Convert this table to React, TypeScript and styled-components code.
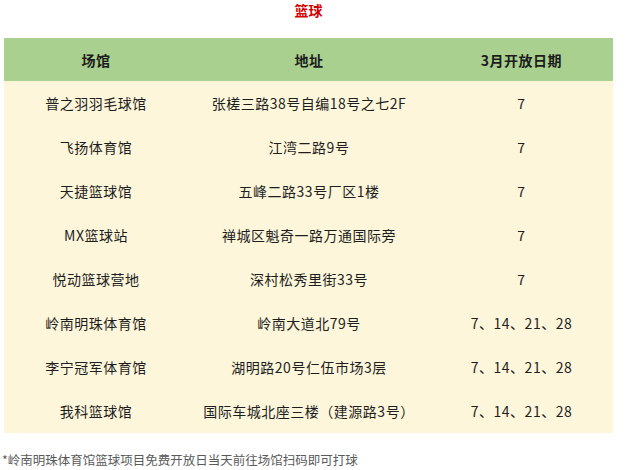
import React from "react";
import styled, { createGlobalStyle } from "styled-components";

const Global = createGlobalStyle`
  html, body { margin: 0; padding: 0; background: #ffffff; }
  body { font-family: "Noto Sans CJK SC", "Noto Sans", sans-serif; }
`;

const Page = styled.div`
  width: 626px;
  height: 470px;
  padding: 0 13px 0 4px;
  box-sizing: border-box;
  display: flex;
  flex-direction: column;
`;

const Title = styled.h2`
  margin: 0;
  height: 20px;
  padding-top: 0;
  text-align: center;
  font-size: 14px;
  line-height: 20px;
  font-weight: 700;
  color: #d40000;
  margin-bottom: 18px;
`;

const Table = styled.div`
  display: grid;
  grid-template-columns: 184px 242px 183px;
  background: #fdf6da;
`;

const HeadCell = styled.div`
  height: 43px;
  display: flex;
  align-items: center;
  justify-content: center;
  background: #a9d08e;
  font-size: 14px;
  font-weight: 700;
  color: #1c1c1c;
  letter-spacing: 0.5px;
`;

const Cell = styled.div`
  height: 44px;
  display: flex;
  align-items: center;
  justify-content: center;
  font-size: 14px;
  font-weight: 400;
  color: #1e1e1e;
  letter-spacing: 0.5px;
  white-space: nowrap;
`;

const Note = styled.p`
  margin: 19px 0 0 -2px;
  font-size: 12.5px;
  line-height: 16px;
  color: #5a5a5a;
`;

const rows: [string, string, string][] = [
  ["普之羽羽毛球馆", "张槎三路38号自编18号之七2F", "7"],
  ["飞扬体育馆", "江湾二路9号", "7"],
  ["天捷篮球馆", "五峰二路33号厂区1楼", "7"],
  ["MX篮球站", "禅城区魁奇一路万通国际旁", "7"],
  ["悦动篮球营地", "深村松秀里街33号", "7"],
  ["岭南明珠体育馆", "岭南大道北79号", "7、14、21、28"],
  ["李宁冠军体育馆", "湖明路20号仁伍市场3层", "7、14、21、28"],
  ["我科篮球馆", "国际车城北座三楼（建源路3号）", "7、14、21、28"],
];

export default function App() {
  return (
    <>
      <Global />
      <Page>
        <Title>篮球</Title>
        <Table>
          <HeadCell>场馆</HeadCell>
          <HeadCell>地址</HeadCell>
          <HeadCell>3月开放日期</HeadCell>
          {rows.map((r, i) => (
            <React.Fragment key={i}>
              <Cell>{r[0]}</Cell>
              <Cell>{r[1]}</Cell>
              <Cell>{r[2]}</Cell>
            </React.Fragment>
          ))}
        </Table>
        <Note>*岭南明珠体育馆篮球项目免费开放日当天前往场馆扫码即可打球</Note>
      </Page>
    </>
  );
}
